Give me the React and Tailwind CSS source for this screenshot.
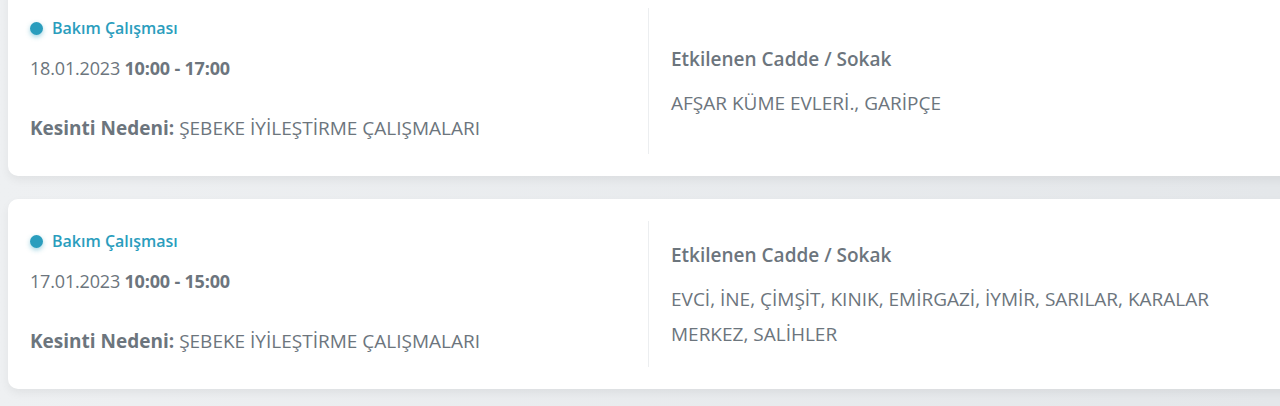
const outages = [
  {
    id: 1,
    type: 'Bakım Çalışması',
    date: '18.01.2023',
    time: '10:00 - 17:00',
    reason: 'ŞEBEKE İYİLEŞTİRME ÇALIŞMALARI',
    streets: 'AFŞAR KÜME EVLERİ., GARİPÇE',
  },
  {
    id: 2,
    type: 'Bakım Çalışması',
    date: '17.01.2023',
    time: '10:00 - 15:00',
    reason: 'ŞEBEKE İYİLEŞTİRME ÇALIŞMALARI',
    streets: 'EVCİ, İNE, ÇİMŞİT, KINIK, EMİRGAZİ, İYMİR, SARILAR, KARALAR MERKEZ, SALİHLER',
  },
];

function OutageCard({ item }) {
  return (
    <div className="bg-white rounded-[10px] shadow-[0_4px_10px_rgba(0,0,0,0.06)] h-[190px] pt-[22px] flex">
      <div className="w-[640px] pl-[22px] pt-[10px] shrink-0">
        <div className="flex items-center h-[20px]">
          <span className="w-[13px] h-[13px] rounded-full bg-[#2a9dbd] shadow-[0_2px_5px_rgba(42,157,189,0.45)]" />
          <span className="ml-[9px] text-[16px] font-semibold text-[#2a9dbd]">{item.type}</span>
        </div>
        <div className="mt-[18px] text-[18px] text-[#6c757d] leading-[24px] tracking-[-0.01em]">
          {item.date} <span className="font-bold">{item.time}</span>
        </div>
        <div className="mt-[36px] text-[19px] text-[#6c757d] leading-[24px]">
          <span className="font-bold">Kesinti Nedeni:</span> {item.reason}
        </div>
      </div>
      <div className="border-l border-[#eceef0] h-[146px] pl-[22px] pr-[40px] pt-[6px] flex flex-col justify-center">
        <div className="text-[19px] font-semibold text-[#6c757d] leading-[24px]">Etkilenen Cadde / Sokak</div>
        <div className="mt-[15px] text-[19px] text-[#6c757d] leading-[35px] max-w-[570px]">{item.streets}</div>
      </div>
    </div>
  );
}

export default function App() {
  return (
    <div
      className="h-[406px] overflow-hidden bg-gradient-to-r from-[#eef0f2] to-[#e4e7ea]"
      style={{ fontFamily: '"Open Sans", "Noto Sans", sans-serif' }}
    >
      <div className="-mt-[14px] ml-[8px] -mr-[20px] flex flex-col gap-[23px]">
        {outages.map((item) => (
          <OutageCard key={item.id} item={item} />
        ))}
      </div>
    </div>
  );
}
